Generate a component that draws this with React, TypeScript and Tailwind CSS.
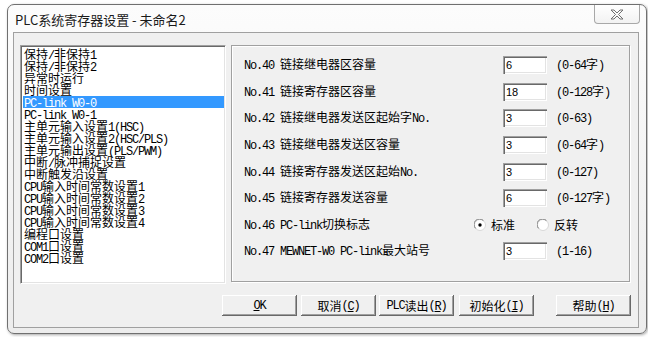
import type { ReactNode } from 'react';

// SimSun-like mix: ASCII runs in a narrow mono, CJK in Noto
function T({ s }: { s: string }) {
  const parts = s.match(/[\x20-\x7e]+|[^\x20-\x7e]+/g) ?? [];
  return (
    <>
      {parts.map((p, i) =>
        /^[\x20-\x7e]/.test(p) ? (
          <span key={i} className="font-['Liberation_Mono',monospace] text-[12px] tracking-[-1.2px] whitespace-pre">
            {p}
          </span>
        ) : (
          <span key={i}>{p}</span>
        )
      )}
    </>
  );
}

const listItems = [
  '保持/非保持1',
  '保持/非保持2',
  '异常时运行',
  '时间设置',
  'PC-link W0-0',
  'PC-link W0-1',
  '主单元输入设置1(HSC)',
  '主单元输入设置2(HSC/PLS)',
  '主单元输出设置(PLS/PWM)',
  '中断/脉冲捕捉设置',
  '中断触发沿设置',
  'CPU输入时间常数设置1',
  'CPU输入时间常数设置2',
  'CPU输入时间常数设置3',
  'CPU输入时间常数设置4',
  '编程口设置',
  'COM1口设置',
  'COM2口设置',
];

const rows: Array<[string, string, string] | null> = [
  ['No.40 链接继电器区容量', '6', '(0-64字)'],
  ['No.41 链接寄存器区容量', '18', '(0-128字)'],
  ['No.42 链接继电器发送区起始字No.', '3', '(0-63)'],
  ['No.43 链接继电器发送区容量', '3', '(0-64字)'],
  ['No.44 链接寄存器发送区起始No.', '3', '(0-127)'],
  ['No.45 链接寄存器发送容量', '6', '(0-127字)'],
  null,
  ['No.47 MEWNET-W0 PC-link最大站号', '3', '(1-16)'],
];

function Radio({ on }: { on?: boolean }) {
  return (
    <svg width="12" height="12" viewBox="0 0 12 12">
      <circle cx="6" cy="6" r="5.5" fill="#fff" stroke="#d8d8d8" />
      <path d="M1.6 9.4 A4.8 4.8 0 0 1 9.4 1.6" fill="none" stroke="#7a7a7a" />
      {on && <circle cx="6" cy="6" r="1.7" fill="#000" />}
    </svg>
  );
}

function Btn({ children, className = '' }: { children: ReactNode; className?: string }) {
  return (
    <div
      className={`flex h-[21px] w-[75px] items-center justify-center bg-[#f0f0f0] leading-[12px] shadow-[inset_-1px_-1px_0_#696969,inset_1px_1px_0_#fff,inset_-2px_-2px_0_#a0a0a0] ${className}`}
    >
      {children}
    </div>
  );
}

export default function App() {
  return (
    <div className="h-[337px] w-[648px] bg-white pl-[7px] pt-[4px] font-['Noto_Sans_CJK_SC',sans-serif] text-[12px] text-black">
      <div className="flex h-[330px] w-[640px] flex-col rounded-[7px] border border-[#707070] bg-gradient-to-b from-[#fcfcfc] via-[#f4f4f4] to-[#ededed] shadow-[1px_1px_3px_rgba(0,0,0,0.35)]">
        {/* title bar */}
        <div className="flex h-[27px] items-start justify-between">
          <div className="pl-[7px] pt-[7px] text-[13px] leading-[16px] text-[#1a1a1a]">PLC系统寄存器设置 - 未命名2</div>
          <div className="mr-[6px] flex h-[19px] w-[46px] items-center justify-center rounded-b-[4px] border border-t-0 border-[#a8a8a8] bg-gradient-to-b from-[#ffffff] to-[#f2f2f2]">
            <svg width="14" height="11" viewBox="0 0 14 11">
              <path
                d="M1 1 h3 l3 3 l3 -3 h3 l-4.5 4.5 l4.5 4.5 h-3 l-3 -3 l-3 3 h-3 l4.5 -4.5 z"
                fill="#fafafa"
                stroke="#707070"
                strokeWidth="1"
              />
            </svg>
          </div>
        </div>

        {/* client */}
        <div className="mb-[5px] ml-[5px] mr-[7px] flex-1 border border-[#a0a0a0] bg-[#f0f0f0] pl-[6px] pt-[12px]">
          <div className="flex gap-[5px]">
            {/* list box */}
            <div className="h-[239px] w-[206px] border border-t-[#a0a0a0] border-l-[#a0a0a0] border-b-white border-r-white bg-white p-px shadow-[inset_1px_1px_0_#696969,inset_-1px_-1px_0_#e3e3e3]">
              <div className="pl-px pt-px">
                {listItems.map((it) => (
                  <div
                    key={it}
                    className={`h-[12px] whitespace-nowrap pl-[1px] text-[12px] leading-[12px] ${
                      it === 'PC-link W0-0' ? 'bg-[#3399ff] text-white' : ''
                    }`}
                  >
                    <T s={it} />
                  </div>
                ))}
              </div>
            </div>

            {/* group box */}
            <div className="h-[237px] w-[399px] border border-[#a0a0a0] pl-[12px] pt-[6px] shadow-[inset_1px_1px_0_#fff,1px_1px_0_#fff]">
              {rows.map((r, i) =>
                r ? (
                  <div key={i} className="flex h-[26.6px] items-center leading-[12px]">
                    <div className="w-[259px] whitespace-nowrap">
                      <T s={r[0]} />
                    </div>
                    <div className="flex h-[18px] w-[44px] items-center bg-white pl-[3px] font-['Liberation_Sans',sans-serif] text-[11px] shadow-[inset_1px_1px_0_#a0a0a0,inset_2px_2px_0_#696969,inset_-1px_-1px_0_#fff,inset_-2px_-2px_0_#e3e3e3]">
                      {r[1]}
                    </div>
                    <div className="ml-[9px] whitespace-nowrap">
                      <T s={r[2]} />
                    </div>
                  </div>
                ) : (
                  <div key={i} className="flex h-[26.6px] items-center leading-[12px]">
                    <div className="w-[230px] whitespace-nowrap">
                      <T s="No.46 PC-link切换标志" />
                    </div>
                    <Radio on />
                    <span className="ml-[5px]">标准</span>
                    <div className="ml-[22px]">
                      <Radio />
                    </div>
                    <span className="ml-[5px]">反转</span>
                  </div>
                )
              )}
            </div>
          </div>

          {/* buttons */}
          <div className="mt-[11px] flex pl-[202px]">
            <Btn>
              <span className="font-['Liberation_Mono',monospace] text-[12px] tracking-[-1.2px]">
                <u>O</u>K
              </span>
            </Btn>
            <Btn className="ml-[4px]">
              取消<T s="(" />
              <u><T s="C" /></u>
              <T s=")" />
            </Btn>
            <Btn className="ml-[3px]">
              <T s="PLC" />读出<T s="(" />
              <u><T s="R" /></u>
              <T s=")" />
            </Btn>
            <Btn className="ml-[5px]">
              初始化<T s="(" />
              <u><T s="I" /></u>
              <T s=")" />
            </Btn>
            <Btn className="ml-[22px]">
              帮助<T s="(" />
              <u><T s="H" /></u>
              <T s=")" />
            </Btn>
          </div>
        </div>
      </div>
    </div>
  );
}
